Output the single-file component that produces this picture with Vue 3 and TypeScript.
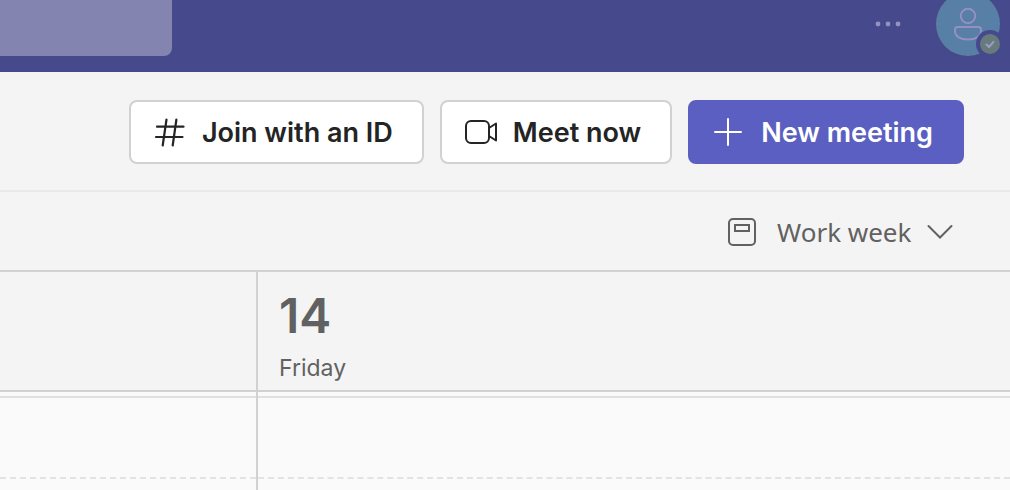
<script setup lang="ts">
import { ref } from 'vue'

interface Day {
  date: number
  name: string
}

const search = ref('')
const view = ref('Work week')
const views: string[] = ['Work week']
const day: Day = { date: 14, name: 'Friday' }
</script>

<template>
  <div class="app">
    <header class="topbar">
      <input v-model="search" class="search" type="text" aria-label="Search" />
      <div class="account">
        <button class="more" type="button" aria-label="Settings and more">
          <svg width="28" height="8" viewBox="0 0 28 8" fill="currentColor">
            <circle cx="4" cy="4" r="2.4" />
            <circle cx="14" cy="4" r="2.4" />
            <circle cx="24" cy="4" r="2.4" />
          </svg>
        </button>
        <button class="avatar" type="button" aria-label="Profile, available">
          <svg width="64" height="64" viewBox="0 0 64 64" fill="none">
            <circle cx="32" cy="32" r="32" fill="#587fa6" />
            <g stroke="#9490c3" stroke-width="2">
              <circle cx="32" cy="24" r="7.2" />
              <path d="M21.500 35H42.500Q45 35 45 37.500V39C45 44.500 39.500 47.500 32 47.500S19 44.500 19 39V37.500Q19 35 21.500 35Z" />
            </g>
            <circle cx="54" cy="52" r="14" fill="#46498c" />
            <circle cx="54" cy="52" r="10" fill="#687b7c" />
            <path d="M50.500 52.500L53 55L57.500 49.800" stroke="#9b9bc9" stroke-width="2" stroke-linecap="round" stroke-linejoin="round" />
          </svg>
        </button>
      </div>
    </header>

    <div class="actions">
      <button class="btn" type="button">
        <svg width="32" height="32" viewBox="0 0 32 32" fill="none" stroke="currentColor" stroke-width="2.2" stroke-linecap="round">
          <path d="M12.500 3.500L8.700 29.500M22.400 3.500L18.700 29.500M3 10.700H29.500M2 21H28.500" />
        </svg>
        <span>Join with an ID</span>
      </button>
      <button class="btn" type="button">
        <svg width="32" height="32" viewBox="0 0 32 32" fill="none" stroke="currentColor" stroke-width="2" stroke-linejoin="round">
          <rect x="1" y="5" width="23" height="22" rx="5" />
          <path d="M24 12L31 7.500V24.500L24 20" />
        </svg>
        <span>Meet now</span>
      </button>
      <button class="btn primary" type="button">
        <svg width="32" height="32" viewBox="0 0 32 32" fill="none" stroke="currentColor" stroke-width="2" stroke-linecap="round">
          <path d="M15 3V29M2 16H28" />
        </svg>
        <span>New meeting</span>
      </button>
    </div>

    <div class="toolbar">
      <label class="view" for="view">
        <svg width="28" height="28" viewBox="0 0 28 28" fill="none" stroke="currentColor" stroke-width="2">
          <rect x="1" y="1" width="26" height="26" rx="4" />
          <rect x="7" y="7" width="14" height="6" />
        </svg>
        <select id="view" v-model="view" aria-label="Calendar view">
          <option v-for="v in views" :key="v" :value="v">{{ v }}</option>
        </select>
        <svg width="26" height="28" viewBox="0 0 26 28" fill="none" stroke="currentColor" stroke-width="2" stroke-linecap="round">
          <path d="M1.500 8L13 19.500L24.500 8" />
        </svg>
      </label>
    </div>

    <main class="calendar">
      <section class="day previous">
        <div class="heading"></div>
        <div class="edge"></div>
        <div class="slot"></div>
        <div class="rest"></div>
      </section>
      <section class="day">
        <div class="heading">
          <h2>{{ day.date }}</h2>
          <p>{{ day.name }}</p>
        </div>
        <div class="edge"></div>
        <div class="slot"></div>
        <div class="rest"></div>
      </section>
    </main>
  </div>
</template>

<style>
body {
  margin: 0;
}
</style>

<style scoped>
.app {
  display: flex;
  flex-direction: column;
  min-height: 100vh;
  overflow: hidden;
  background: #f4f4f4;
  color: #616161;
  font-family: Inter, "Liberation Sans", sans-serif;
}

.app *,
.app {
  box-sizing: border-box;
}

svg {
  display: block;
  flex: none;
}

button {
  font: inherit;
  cursor: pointer;
}

.topbar {
  display: flex;
  align-items: flex-start;
  justify-content: space-between;
  height: 72px;
  background: #46498c;
}

.search {
  width: 172px;
  height: 56px;
  padding: 0 16px;
  border: 0;
  border-radius: 0 0 8px 0;
  background: #8484b1;
  color: #fff;
  font-size: 24px;
}

.account {
  display: flex;
  align-items: center;
  gap: 34px;
  margin-top: -8px;
  padding-right: 10px;
}

.more,
.avatar {
  padding: 0;
  border: 0;
  background: none;
  color: #9490c3;
}

.actions {
  display: flex;
  justify-content: flex-end;
  gap: 16px;
  padding: 28px 46px 26px 0;
  border-bottom: 2px solid #e9e9e9;
}

.btn {
  display: flex;
  align-items: center;
  gap: 16px;
  height: 64px;
  padding: 0 29px 0 23px;
  border: 2px solid #d1d1d1;
  border-radius: 8px;
  background: #fff;
  color: #242424;
  font-size: 27px;
  font-weight: 600;
  white-space: nowrap;
}

.primary {
  border-color: #5b5fc1;
  background: #5b5fc1;
  color: #fff;
}

.toolbar {
  display: flex;
  justify-content: flex-end;
  align-items: center;
  height: 80px;
  padding: 2px 57px 0 0;
  border-bottom: 2px solid #d1d1d1;
}

.view {
  display: flex;
  align-items: center;
}

.view select {
  margin: 0 15px 0 21px;
  padding: 0;
  border: 0;
  appearance: none;
  background: none;
  color: inherit;
  font-family: "Noto Sans", "Open Sans", sans-serif;
  font-size: 26px;
}

.calendar {
  display: flex;
  flex: 1;
}

.day {
  display: flex;
  flex: 1;
  flex-direction: column;
}

.previous {
  flex: 0 0 258px;
  border-right: 2px solid #d1d1d1;
}

.heading {
  height: 120px;
  padding: 16px 21px 0;
  border-bottom: 2px solid #d1d1d1;
}

.heading h2 {
  margin: 0;
  font-size: 48px;
  font-weight: 600;
  line-height: 56px;
}

.heading p {
  margin: 8px 0 0;
  font-size: 23px;
  line-height: 32px;
}

.edge {
  height: 6px;
  border-bottom: 2px solid #e0e0e0;
  background: #fafafa;
}

.slot {
  height: 81px;
  border-bottom: 2px dashed #e3e3e3;
  background: #fafafa;
}

.rest {
  flex: 1;
  background: #fafafa;
}
</style>
